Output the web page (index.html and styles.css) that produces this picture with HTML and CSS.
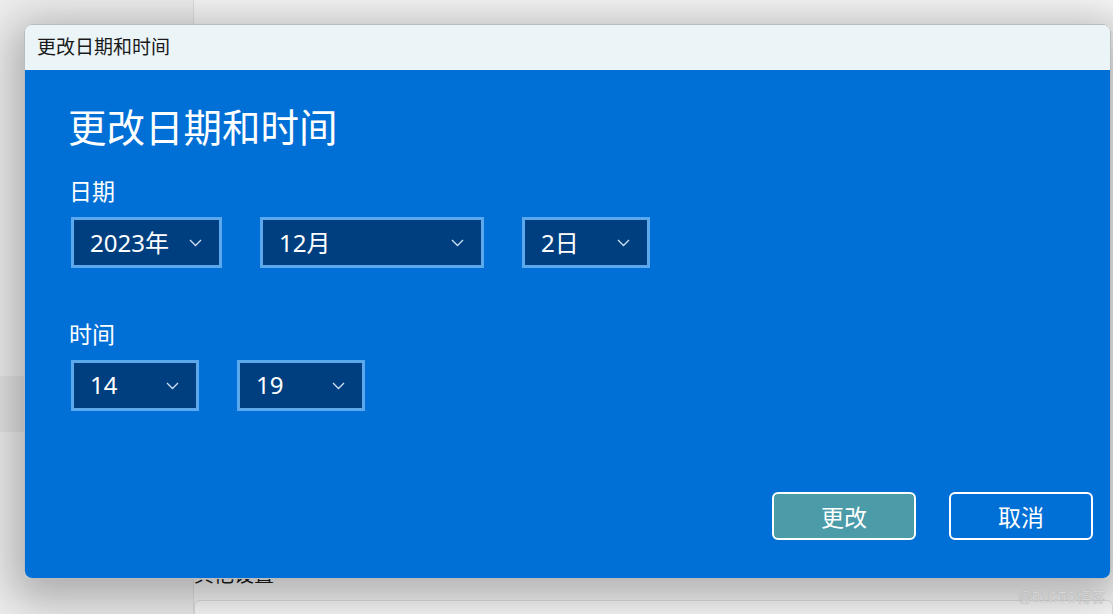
FILE: index.html
```html
<!DOCTYPE html>
<html lang="zh-CN">

<head>
    <meta charset="UTF-8">
    <meta name="viewport" content="width=device-width, initial-scale=1.0">
    <title>更改日期和时间</title>
    <link rel="stylesheet" href="styles.css">
</head>

<body>

    <!-- Settings page behind the dialog -->
    <div class="backdrop">
        <aside class="sidebar">
            <div class="nav-item"></div>
        </aside>
        <main class="content">
            <h3 class="section-title">其他设置</h3>
            <div class="card"></div>
        </main>
    </div>

    <!-- Change date and time dialog -->
    <div class="dialog">
        <div class="title-bar">更改日期和时间</div>
        <div class="dialog-body">
            <h1 class="dialog-heading">更改日期和时间</h1>

            <div class="field-label">日期</div>
            <div class="select-row">
                <div class="select select-year">
                    <span>2023年</span>
                    <svg class="chevron" width="13" height="8" viewBox="0 0 13 8"><polyline points="1,1 6.5,6.5 12,1" /></svg>
                </div>
                <div class="select select-month">
                    <span>12月</span>
                    <svg class="chevron" width="13" height="8" viewBox="0 0 13 8"><polyline points="1,1 6.5,6.5 12,1" /></svg>
                </div>
                <div class="select select-small">
                    <span>2日</span>
                    <svg class="chevron" width="13" height="8" viewBox="0 0 13 8"><polyline points="1,1 6.5,6.5 12,1" /></svg>
                </div>
            </div>

            <div class="field-label field-label-time">时间</div>
            <div class="select-row">
                <div class="select select-small">
                    <span>14</span>
                    <svg class="chevron" width="13" height="8" viewBox="0 0 13 8"><polyline points="1,1 6.5,6.5 12,1" /></svg>
                </div>
                <div class="select select-small">
                    <span>19</span>
                    <svg class="chevron" width="13" height="8" viewBox="0 0 13 8"><polyline points="1,1 6.5,6.5 12,1" /></svg>
                </div>
            </div>

            <div class="button-row">
                <button class="btn btn-primary">更改</button>
                <button class="btn">取消</button>
            </div>
        </div>
    </div>

    <div class="watermark">@51CTO博客</div>

</body>

</html>
```

FILE: styles.css
```css
/* Page base */
body {
    margin: 0;
    padding: 0;
    width: 1113px;
    height: 614px;
    overflow: hidden;
    font-family: "Noto Sans", "Noto Sans CJK SC", sans-serif;
    background-color: #ececec;
    position: relative;
}

/* Settings window behind */
.backdrop {
    display: flex;
    height: 100%;
}

.sidebar {
    width: 193px;
    flex-shrink: 0;
    background-color: #eeeeee;
    padding-top: 376px;
    box-sizing: border-box;
}

.nav-item {
    height: 56px;
    background-color: #e4e4e4;
}

.content {
    flex: 1;
    background-color: #f6f6f6;
    border-left: 1px solid #dedede;
    padding-top: 562px;
    box-sizing: border-box;
}

.section-title {
    margin: 0;
    font-size: 20px;
    font-weight: normal;
    line-height: 26px;
    color: #1b1b1b;
}

.card {
    margin-top: 12px;
    height: 40px;
    background-color: #fbfbfb;
    border: 1px solid #e0e0e0;
    border-radius: 6px;
}

/* Dialog */
.dialog {
    position: absolute;
    top: 24px;
    left: 24px;
    width: 1087px;
    height: 555px;
    border-radius: 8px;
    overflow: hidden;
    display: flex;
    flex-direction: column;
    border: 1px solid #b9bcbe;
    box-sizing: border-box;
    box-shadow: 0 10px 44px 12px rgba(0, 0, 0, 0.28);
}

.title-bar {
    height: 45px;
    flex-shrink: 0;
    background-color: #ebf5f8;
    color: #1a1a1a;
    font-size: 19px;
    line-height: 45px;
    padding-left: 12px;
}

.dialog-body {
    flex: 1;
    background-color: #0070d6;
    color: white;
    padding: 32px 17px 38px 43px;
    display: flex;
    flex-direction: column;
}

.dialog-heading {
    margin: 0;
    font-size: 38.5px;
    font-weight: normal;
    line-height: 50px;
}

.field-label {
    margin-top: 24px;
    margin-left: 1px;
    font-size: 23px;
    line-height: 30px;
}

.field-label-time {
    margin-top: 51px;
}

/* Select boxes */
.select-row {
    display: flex;
    gap: 38px;
    margin-top: 11px;
    margin-left: 3px;
}

.select {
    height: 51px;
    box-sizing: border-box;
    border: 3px solid #5ba8ec;
    background-color: #003f7f;
    display: flex;
    align-items: center;
    justify-content: space-between;
    padding: 0 17px 3px 16px;
    font-size: 24px;
}

.select-year {
    width: 151px;
}

.select-month {
    width: 224px;
}

.select-small {
    width: 128px;
}

.chevron {
    margin-top: 3px;
}

.chevron polyline {
    fill: none;
    stroke: #cfe2f5;
    stroke-width: 1.3;
}

/* Buttons */
.button-row {
    margin-top: auto;
    display: flex;
    justify-content: flex-end;
    gap: 33px;
}

.btn {
    width: 144px;
    height: 48px;
    box-sizing: border-box;
    border: 2px solid white;
    border-radius: 6px;
    background-color: transparent;
    color: white;
    font-family: "Noto Sans", "Noto Sans CJK SC", sans-serif;
    font-size: 23px;
    padding: 0;
}

.btn-primary {
    background-color: #4b9ba8;
}

.watermark {
    position: absolute;
    right: 8px;
    bottom: 8px;
    font-size: 14px;
    color: #d6d6d6;
    text-shadow: 0 0 1px #9a9a9a;
    font-family: "Liberation Sans", "Noto Sans CJK SC", sans-serif;
}
```
